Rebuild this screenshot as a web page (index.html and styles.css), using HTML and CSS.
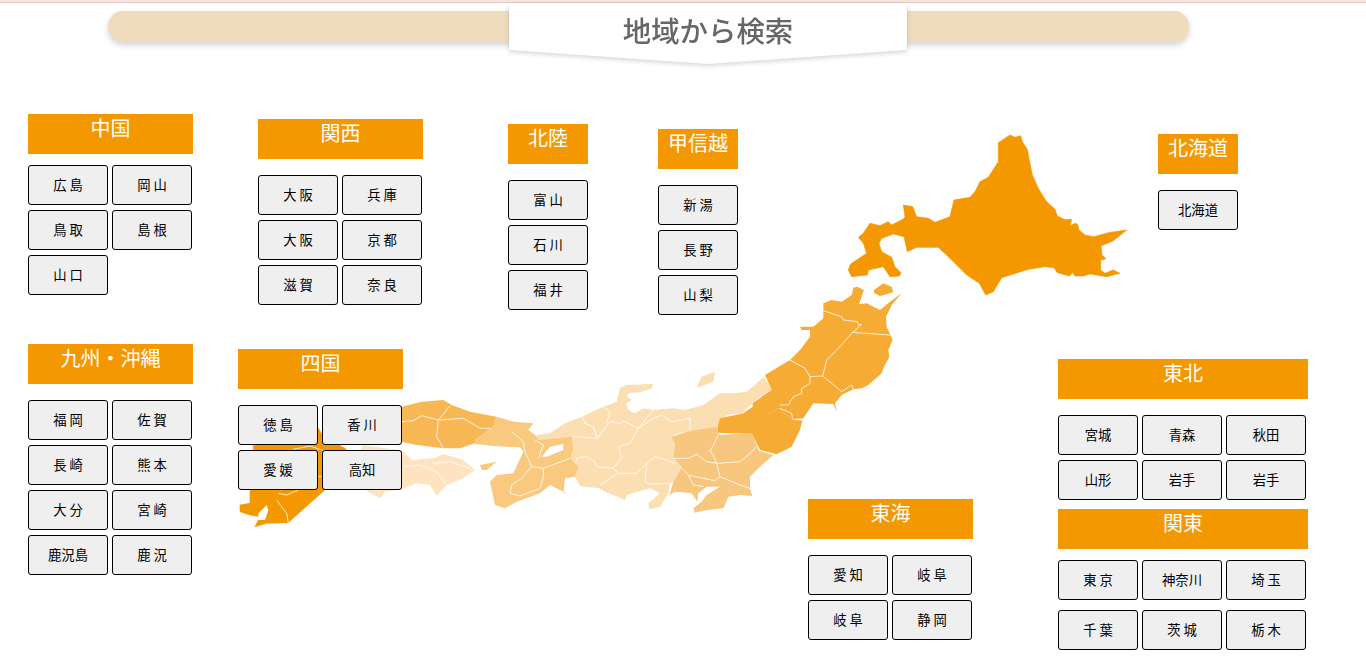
FILE: index.html
```html
<!DOCTYPE html>
<html lang="ja">
<head>
<meta charset="utf-8">
<title>地域から検索</title>
<link rel="stylesheet" href="styles.css">
</head>
<body>
<div class="topline"></div>
<header class="head">
  <div class="bar"></div>
  <h1 class="ribbon"><span class="ribbon-text">地域から検索</span></h1>
</header>
<main class="canvas">
  <svg class="map" width="1366" height="656" viewBox="0 0 1366 656" aria-hidden="true">
    <g transform="translate(780 120) scale(.33333)">
      <path class="hk" d="M690 45L705 52L722 47L727 65L742 88L748 120L757 165L775 205L798 243L825 268L832 288L855 299L875 298L870 318L885 310L893 313L897 330L915 345L942 350L985 338L1040 330L1000 362L963 378L966 405L978 416L962 420L962 450L975 460L1000 450L1020 460L980 470L930 462L910 468L885 468L878 458L868 468L832 458L822 443L795 440L745 448L665 473L640 515L617 525L598 490L560 465L505 410L475 382L410 382L382 395L372 350L340 342L305 355L297 370L305 395L335 412L345 440L363 458L358 468L330 470L310 440L265 450L262 465L215 470L205 450L212 432L260 400L250 370L235 352L250 340L270 310L300 317L325 305L335 315L370 297L375 290L370 255L398 260L410 290L445 295L465 307L510 290L522 240L570 232L585 215L600 185L625 172L655 125L655 68Z"/>
      <path class="th" d="M130 550L155 540L185 545L215 525L220 503L232 500L252 510L237 553L260 550L280 560L300 570L330 545L365 520L335 555L318 590L320 620L338 660L325 690L328 710L310 745L305 760L265 795L245 805L220 808L185 825L165 850L170 875L160 852L100 850L70 895L35 898L-5 865L-35 882L-60 875L-82 860L-82 850L-40 820L-25 810L-45 765L30 720L60 690L90 650L90 630L65 630L60 620L100 620L130 595Z"/>
      <path class="th" d="M282 510L310 490L335 500L340 517L300 528L282 518Z"/>
      <path class="ln" d="M130 572L185 590L190 600L232 605L235 615L245 613L215 640L175 685L140 720L128 768L155 790L185 815L215 795L220 808M215 637L330 645M30 720L75 745L90 770L128 768M90 770L90 790L65 805L65 820L40 830L25 855L0 855M0 865L35 880L38 900"/>
    </g>
    <g transform="translate(560 360) scale(.33333)">
      <path class="cb" d="M15 190L65 170L130 140L170 125L180 85L200 75L280 72L275 85L240 97L205 100L200 108L215 120L198 130L205 150L225 160L250 145L280 150L340 145L375 150L430 135L480 100L520 100L560 95L610 52L625 70L635 90L620 100L600 110L578 130L545 160L500 165L475 195L470 200L390 212L340 225L345 250L340 295L365 320L340 365L330 370L325 400L300 440L268 448L265 430L300 400L270 385L200 405L197 420L135 395L118 385L60 378L45 350L50 320L25 295L40 260L35 230L15 215Z"/>
      <path class="cb" d="M410 80L425 50L465 35L460 65L420 80Z"/>
      <path class="kt" d="M470 200L475 220L480 225L575 218L590 255L597 272L640 285L600 320L570 350L570 385L577 408L540 405L505 410L490 445L440 450L405 458L400 445L425 425L440 405L480 380L440 380L415 400L412 425L395 400L345 395L328 405L340 365L365 320L340 295L345 250L335 230L390 212Z"/>
      <path class="th" d="M472 205L480 175L550 160L578 140L625 162L655 145L695 178L727 182L720 210L695 260L650 283L600 270L585 240L575 220L520 220L475 218Z"/>
      <path class="ln" d="M67 170L75 190L100 200L112 235L40 230M112 235L150 185L180 190L190 183L235 205L280 150M130 140L150 155L140 190M235 205L210 250L175 260L185 295L160 325L110 320L105 305L80 290L50 295L45 320M160 325L175 340L230 340L260 310L285 290L320 300L345 310M175 340L120 375M260 310L255 365L270 372L330 370M235 205L280 175L305 165L335 185L390 175L390 212M340 295L385 295L410 283L440 305L470 310L460 285L450 275L475 225M470 310L540 305L565 285L590 260M470 310L480 350L540 375L570 385M360 320L385 345L430 355L465 362L480 350M385 345L400 375L430 380"/>
    </g>
    <g transform="translate(230 370) scale(.33333)">
      <path class="ks" d="M265 175L280 200L345 235L350 240L290 240L290 355L200 435L175 458L110 460L75 470L90 440L60 435L30 425L30 405L60 400L60 360L30 300L70 240L70 225L110 225Z"/>
      <path class="wh" d="M110 405L85 430L85 450L105 450L115 420Z"/>
      <path class="ln" d="M145 370L170 375L205 360M140 390L170 430L175 458M190 238L240 228L290 245M262 320L280 320"/>
      <path class="sk" d="M515 240L545 270L610 265L640 252L700 270L735 300L700 325L650 345L620 378L600 345L560 340L515 358L465 365L450 385L415 365L350 320L400 225L440 232Z"/>
      <path class="ln" d="M520 290L570 285L620 305L650 345M610 280L660 275L720 295"/>
      <path class="cg" d="M400 120L515 110L575 95L640 90L665 105L720 125L800 140L790 170L735 210L735 220L690 235L640 235L560 225L515 215L400 215Z"/>
      <path class="ln" d="M515 155L550 152L575 137L625 150L660 108M625 150L620 200L640 235M625 150L700 145L750 175L790 175"/>
      <path class="cb" d="M915 195L960 190L1005 160L1040 230L1000 225L925 215Z"/>
      <path class="kk" d="M800 140L850 155L910 160L895 180L915 195L925 210L985 205L1025 200L1030 240L1020 265L1045 290L1035 320L1005 325L1000 370L1010 370L960 345L930 370L860 395L825 415L795 405L780 335L800 315L850 310L880 245L870 232L790 228L735 222L735 210L790 170Z"/>
      <path class="kk" d="M750 285L800 275L770 300L755 300Z"/>
      <path class="wh" d="M935 260L960 230L1000 222L1000 240L950 260Z"/>
      <path class="ln" d="M845 185L880 215L885 245L905 290L940 295L1020 265M905 290L875 325L845 345L840 370L870 378L930 355L940 320L940 295M915 210L940 225L925 265"/>
    </g>
  </svg>

  <section class="region r-chugoku">
    <h2 class="title">中国</h2>
    <div class="grid two">
      <button class="pref">広 島</button><button class="pref">岡 山</button>
      <button class="pref">鳥 取</button><button class="pref">島 根</button>
      <button class="pref">山 口</button>
    </div>
  </section>
  <section class="region r-kansai">
    <h2 class="title">関西</h2>
    <div class="grid two">
      <button class="pref">大 阪</button><button class="pref">兵 庫</button>
      <button class="pref">大 阪</button><button class="pref">京 都</button>
      <button class="pref">滋 賀</button><button class="pref">奈 良</button>
    </div>
  </section>
  <section class="region r-hokuriku">
    <h2 class="title">北陸</h2>
    <div class="grid one">
      <button class="pref">富 山</button>
      <button class="pref">石 川</button>
      <button class="pref">福 井</button>
    </div>
  </section>
  <section class="region r-koshinetsu">
    <h2 class="title">甲信越</h2>
    <div class="grid one">
      <button class="pref">新 湯</button>
      <button class="pref">長 野</button>
      <button class="pref">山 梨</button>
    </div>
  </section>
  <section class="region r-hokkaido">
    <h2 class="title">北海道</h2>
    <div class="grid one">
      <button class="pref">北海道</button>
    </div>
  </section>
  <section class="region r-kyushu">
    <h2 class="title">九州・沖縄</h2>
    <div class="grid two">
      <button class="pref">福 岡</button><button class="pref">佐 賀</button>
      <button class="pref">長 崎</button><button class="pref">熊 本</button>
      <button class="pref">大 分</button><button class="pref">宮 崎</button>
      <button class="pref">鹿況島</button><button class="pref">鹿 況</button>
    </div>
  </section>
  <section class="region r-shikoku">
    <h2 class="title">四国</h2>
    <div class="grid two">
      <button class="pref">徳 島</button><button class="pref">香 川</button>
      <button class="pref">愛 媛</button><button class="pref">高知</button>
    </div>
  </section>
  <section class="region r-tokai">
    <h2 class="title">東海</h2>
    <div class="grid two">
      <button class="pref">愛 知</button><button class="pref">岐 阜</button>
      <button class="pref">岐 阜</button><button class="pref">静 岡</button>
    </div>
  </section>
  <section class="region r-east">
    <h2 class="title">東北</h2>
    <div class="grid three">
      <button class="pref">宮城</button><button class="pref">青森</button><button class="pref">秋田</button>
      <button class="pref">山形</button><button class="pref">岩手</button><button class="pref">岩手</button>
    </div>
    <h2 class="title title-kanto">関東</h2>
    <div class="grid three wide-rows">
      <button class="pref">東 京</button><button class="pref">神奈川</button><button class="pref">埼 玉</button>
      <button class="pref">千 葉</button><button class="pref">茨 城</button><button class="pref">栃 木</button>
    </div>
  </section>
</main>
</body>
</html>
```

FILE: styles.css
```css
* { box-sizing: border-box; }
html, body { margin: 0; padding: 0; }
body {
  width: 1366px;
  height: 656px;
  overflow: hidden;
  background: #fff;
  font-family: "Noto Sans CJK JP", "Liberation Sans", sans-serif;
}
.topline {
  height: 3px;
  background: #f7e4de;
  border-bottom: 1px solid #e3cbc6;
}
.head {
  position: relative;
  height: 70px;
}
.bar {
  position: absolute;
  left: 108px;
  top: 8px;
  width: 1081px;
  height: 31px;
  border-radius: 15px;
  background: #f0dcbd;
  box-shadow: 0 3px 6px rgba(0, 0, 0, .18);
}
.ribbon {
  position: absolute;
  left: 509px;
  top: 0;
  width: 398px;
  height: 62px;
  margin: 0;
  display: flex;
  justify-content: center;
  filter: drop-shadow(0 2px 2px rgba(0, 0, 0, .16));
}
.ribbon::before {
  content: "";
  position: absolute;
  inset: 0;
  background: #fff;
  clip-path: polygon(0 0, 100% 0, 100% 47px, 50% 61px, 0 47px);
}
.ribbon-text {
  position: relative;
  margin-top: 8px;
  font-size: 28.4px;
  line-height: 38px;
  font-weight: 500;
  color: #666;
  filter: blur(.5px);
}
.canvas {
  position: absolute;
  inset: 0;
}
.map {
  position: absolute;
  left: 0;
  top: 0;
  filter: blur(.45px);
}
.hk, .ks { fill: #f39800; stroke: #f39800; stroke-width: 2; stroke-linejoin: round; }
.th { fill: #f6ab35; }
.cg { fill: #f7b754; }
.kk { fill: #f8c97f; }
.kt { fill: #f8c77f; }
.cb { fill: #fbdfb2; }
.sk { fill: #fde3bf; }
.wh { fill: #fff; }
.ln {
  fill: none;
  stroke: #fff;
  stroke-opacity: .8;
  stroke-width: 3;
}
.region { position: absolute; }
.title {
  margin: 0;
  height: 40px;
  background: #f39800;
  color: #fff;
  font-size: 20px;
  line-height: 28px;
  font-weight: 400;
  text-align: center;
}
.grid {
  display: grid;
  grid-auto-rows: 40px;
  column-gap: 4px;
  row-gap: 5px;
  margin-top: 16px;
}
.two { grid-template-columns: 80px 80px; }
.one { grid-template-columns: 80px; }
.three { grid-template-columns: 80px 80px 80px; }
.wide-rows { row-gap: 10px; margin-top: 11px; }
.title-kanto { margin-top: 9px; }
.pref {
  padding: 0;
  background: #efefef;
  border: 1px solid #000;
  border-radius: 3px;
  color: #000;
  font-family: inherit;
  font-size: 13.33px;
  font-weight: 400;
  line-height: 18px;
}
.r-chugoku { left: 28px; top: 114px; width: 165px; }
.r-chugoku .grid { margin-top: 11px; }
.r-kansai { left: 258px; top: 119px; width: 165px; }
.r-hokuriku { left: 508px; top: 124px; width: 80px; }
.r-koshinetsu { left: 658px; top: 129px; width: 80px; }
.r-hokkaido { left: 1158px; top: 134px; width: 80px; }
.r-kyushu { left: 28px; top: 344px; width: 165px; }
.r-shikoku { left: 238px; top: 349px; width: 165px; }
.r-tokai { left: 808px; top: 499px; width: 165px; }
.r-east { left: 1058px; top: 359px; width: 250px; }
```
